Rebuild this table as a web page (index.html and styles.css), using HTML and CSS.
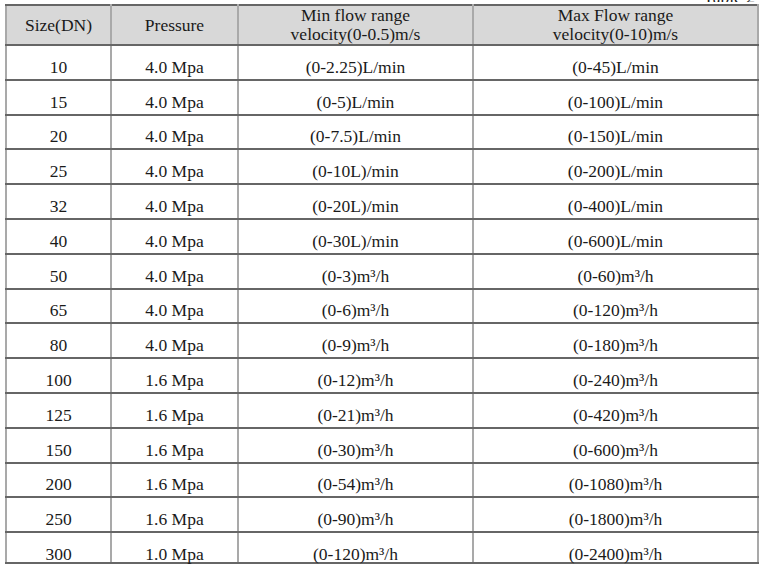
FILE: index.html
```html
<!DOCTYPE html>
<html>
<head>
<meta charset="utf-8">
<link rel="stylesheet" href="styles.css">
</head>
<body>
<div class="sheet">
  <div class="caption">Table 2</div>
  <table class="spec">
    <colgroup>
      <col class="c1"><col class="c2"><col class="c3"><col class="c4">
    </colgroup>
    <thead>
      <tr>
        <th>Size(DN)</th>
        <th>Pressure</th>
        <th>Min flow range<br>velocity(0-0.5)m/s</th>
        <th>Max Flow range<br>velocity(0-10)m/s</th>
      </tr>
    </thead>
    <tbody>
      <tr><td>10</td><td>4.0 Mpa</td><td>(0-2.25)L/min</td><td>(0-45)L/min</td></tr>
      <tr><td>15</td><td>4.0 Mpa</td><td>(0-5)L/min</td><td>(0-100)L/min</td></tr>
      <tr><td>20</td><td>4.0 Mpa</td><td>(0-7.5)L/min</td><td>(0-150)L/min</td></tr>
      <tr><td>25</td><td>4.0 Mpa</td><td>(0-10L)/min</td><td>(0-200)L/min</td></tr>
      <tr><td>32</td><td>4.0 Mpa</td><td>(0-20L)/min</td><td>(0-400)L/min</td></tr>
      <tr><td>40</td><td>4.0 Mpa</td><td>(0-30L)/min</td><td>(0-600)L/min</td></tr>
      <tr><td>50</td><td>4.0 Mpa</td><td>(0-3)m³/h</td><td>(0-60)m³/h</td></tr>
      <tr><td>65</td><td>4.0 Mpa</td><td>(0-6)m³/h</td><td>(0-120)m³/h</td></tr>
      <tr><td>80</td><td>4.0 Mpa</td><td>(0-9)m³/h</td><td>(0-180)m³/h</td></tr>
      <tr><td>100</td><td>1.6 Mpa</td><td>(0-12)m³/h</td><td>(0-240)m³/h</td></tr>
      <tr><td>125</td><td>1.6 Mpa</td><td>(0-21)m³/h</td><td>(0-420)m³/h</td></tr>
      <tr><td>150</td><td>1.6 Mpa</td><td>(0-30)m³/h</td><td>(0-600)m³/h</td></tr>
      <tr><td>200</td><td>1.6 Mpa</td><td>(0-54)m³/h</td><td>(0-1080)m³/h</td></tr>
      <tr><td>250</td><td>1.6 Mpa</td><td>(0-90)m³/h</td><td>(0-1800)m³/h</td></tr>
      <tr class="last"><td>300</td><td>1.0 Mpa</td><td>(0-120)m³/h</td><td>(0-2400)m³/h</td></tr>
    </tbody>
  </table>
</div>
</body>
</html>
```

FILE: styles.css
```css
html, body {
  margin: 0;
  padding: 0;
  background: #ffffff;
  overflow: hidden;
}

.sheet {
  width: 752px;
  margin: -8px 0 0 5px;
  font-family: "Liberation Serif", "Times New Roman", serif;
  font-size: 17.5px;
  color: #1a1a1a;
}

.caption {
  height: 10px;
  line-height: 10px;
  margin-bottom: 2px;
  text-align: right;
  padding-right: 2px;
  overflow: hidden;
}

.spec {
  width: 752px;
  border-collapse: collapse;
  table-layout: fixed;
}

.c1 { width: 105px; }
.c2 { width: 127px; }
.c3 { width: 235px; }
.c4 { width: 285px; }

.spec th,
.spec td {
  padding: 0;
  text-align: center;
  font-weight: normal;
  border-left: 2px solid #a9a9a9;
  border-right: 2px solid #a9a9a9;
  border-top: 2px solid #666666;
  border-bottom: 2px solid #666666;
}

.spec th {
  height: 38px;
  background: #d8d8d8;
  line-height: 19px;
  vertical-align: middle;
}

.spec td {
  box-sizing: border-box;
  height: 34.8px;
  line-height: 20px;
  padding-top: 9px;
}

.spec tr.last td {
  height: 31px;
  vertical-align: top;
  line-height: 14px;
  padding-top: 14px;
}
```
